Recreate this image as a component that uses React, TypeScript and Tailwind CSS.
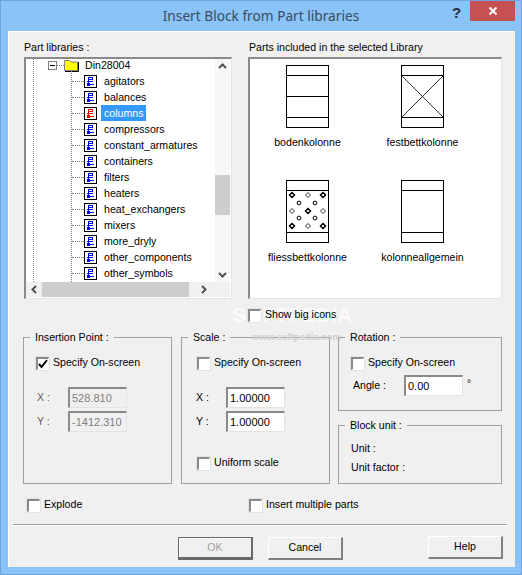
import React from "react";

const F = "font-['Liberation_Sans',Arial,sans-serif]";

function Check({ checked }: { checked?: boolean }) {
  return (
    <span className="w-[13px] h-[13px] shrink-0 bg-white border-t-2 border-l-2 border-t-[#8a8a8a] border-l-[#8a8a8a] border-r border-b border-r-[#fff] border-b-[#fff] outline outline-1 outline-[#e3e3e3] flex items-center justify-center">
      {checked && (
        <svg width="10" height="10" viewBox="0 0 10 10">
          <path d="M1 5 L3.5 8 L9 1" fill="none" stroke="#000" strokeWidth="2" />
        </svg>
      )}
    </span>
  );
}

function CheckRow({ label, checked, className = "" }: { label: string; checked?: boolean; className?: string }) {
  return (
    <div className={`flex items-center h-[14px] gap-[4px] text-[10.6px] text-black ${className}`}>
      <Check checked={checked} />
      <span className="whitespace-nowrap">{label}</span>
    </div>
  );
}

function Field({ value, disabled }: { value: string; disabled?: boolean }) {
  return (
    <input
      readOnly
      value={value}
      className={`w-[59px] h-[21px] pl-[2px] text-[11px] border-t-2 border-l-2 border-t-[#8a8a8a] border-l-[#8a8a8a] border-r border-b border-r-[#e3e3e3] border-b-[#e3e3e3] outline-none ${F} ${
        disabled ? "bg-[#f0f0f0] text-[#808080]" : "bg-white text-black"
      }`}
    />
  );
}

function Group({ title, className, children }: { title: string; className: string; children?: React.ReactNode }) {
  return (
    <fieldset className={`border border-[#a0a0a0] ${className}`}>
      <legend className="ml-[6px] px-[5px] text-[10.6px] leading-[14px] text-black whitespace-nowrap">{title}</legend>
      {children}
    </fieldset>
  );
}

function PartIcon({ color }: { color: string }) {
  return (
    <svg width="13" height="13" viewBox="0 0 13 13" className="shrink-0" shapeRendering="crispEdges">
      <rect x="0.5" y="0.5" width="12" height="12" fill="#fff" stroke="#000" />
      <g fill="none" stroke={color} strokeWidth="1">
        <path d="M4.5 2 V6" />
        <rect x="4.5" y="2.5" width="4" height="2" />
        <path d="M3 6.5 H9" />
        <path d="M4.5 7 V9" />
        <rect x="3.5" y="8.5" width="2" height="2" fill={color} />
        <path d="M5 9.5 H10" />
      </g>
    </svg>
  );
}

function Scroll({ dir }: { dir: "up" | "down" | "left" | "right" }) {
  const d = {
    up: "M1 6 L4.5 2.5 L8 6",
    down: "M1 3 L4.5 6.5 L8 3",
    left: "M6 1 L2.5 4.5 L6 8",
    right: "M3 1 L6.5 4.5 L3 8",
  }[dir];
  return (
    <svg width="9" height="9" viewBox="0 0 9 9">
      <path d={d} fill="none" stroke="#505050" strokeWidth="2" />
    </svg>
  );
}

const items = [
  "agitators",
  "balances",
  "columns",
  "compressors",
  "constant_armatures",
  "containers",
  "filters",
  "heaters",
  "heat_exchangers",
  "mixers",
  "more_dryly",
  "other_components",
  "other_symbols",
];

function Tree() {
  return (
    <div className="relative w-[208px] h-[242px] border-t-2 border-l-2 border-t-[#8a8a8a] border-l-[#8a8a8a] border-r border-b border-r-[#e3e3e3] border-b-[#e3e3e3] bg-white flex flex-col">
      <div className="flex h-[223px]">
        <div className="relative w-[189px] overflow-hidden">
          <div className="absolute left-[7px] top-0 bottom-0 border-l border-dotted border-[#808080]" />
          <div className="absolute left-[45px] top-[12px] bottom-0 border-l border-dotted border-[#808080]" />
          <div className="-mt-[1px] flex items-center h-[15px] pl-[22px] text-[10.6px] text-black">
            <span className="w-[9px] h-[9px] border border-[#808080] bg-white flex items-center justify-center shrink-0">
              <span className="w-[5px] h-px bg-black" />
            </span>
            <span className="w-[7px] border-t border-dotted border-[#808080]" />
            <svg width="15" height="13" viewBox="0 0 15 13" className="shrink-0">
              <path d="M0.5 3.5 V1.5 H5.5 L7 3 H13.5 V11.5 H0.5 Z" fill="#ffff00" stroke="#808080" />
              <path d="M14.5 3 V12.5 H1" fill="none" stroke="#000" />
            </svg>
            <span className="ml-[6px]">Din28004</span>
          </div>
          {items.map((n) => {
            const sel = n === "columns";
            return (
              <div key={n} className="flex items-center h-4 pl-[46px] text-[10.6px] text-black">
                <span className="w-[12px] border-t border-dotted border-[#808080]" />
                <PartIcon color={sel ? "#ff0000" : "#0000ff"} />
                <span
                  className={`ml-[4px] px-[3px] h-4 leading-4 whitespace-nowrap ${sel ? "bg-[#3399ff] text-white" : ""}`}
                >
                  {n}
                </span>
              </div>
            );
          })}
        </div>
        <div className="w-[15px] bg-[#f7f7f7] flex flex-col items-center justify-between py-[3px] relative">
          <Scroll dir="up" />
          <div className="absolute left-0 right-0 top-[116px] h-[40px] bg-[#cdcdcd]" />
          <Scroll dir="down" />
        </div>
      </div>
      <div className="flex items-center h-[15px] w-[204px] bg-[#f0f0f0]">
        <div className="w-[16px] pl-[4px] flex justify-start"><Scroll dir="left" /></div>
        <div className="w-[147px] h-full bg-[#cdcdcd]" />
        <div className="w-[25px] flex justify-center pl-[3px]"><Scroll dir="right" /></div>
      </div>
    </div>
  );
}

function Column({ children, label }: { children?: React.ReactNode; label: string }) {
  return (
    <div className="flex flex-col items-center w-[115px]">
      <svg width="44" height="64" viewBox="0 0 44 64" shapeRendering="crispEdges">
        <rect x="0.5" y="0.5" width="42" height="62" fill="#fff" stroke="#000" strokeWidth="1" />
        <path d="M0 10.5 H43 M0 52.5 H43" stroke="#000" fill="none" />
        {children}
      </svg>
      <span className="mt-[6px] h-[14px] leading-[14px] text-[10.6px] text-black whitespace-nowrap">{label}</span>
    </div>
  );
}

const dots: [number, number, boolean][] = [
  [6, 15, true], [22, 15, false], [37, 15, true],
  [6, 31, false], [22, 31, true], [37, 31, false],
  [6, 46, true], [22, 46, false], [37, 46, true],
];
const rings: [number, number][] = [
  [13, 23], [29, 23], [13, 38], [29, 38],
];

function Parts() {
  return (
    <div className="w-[254px] h-[242px] border-t-2 border-l-2 border-t-[#8a8a8a] border-l-[#8a8a8a] border-r border-b border-r-[#e3e3e3] border-b-[#e3e3e3] bg-white pt-[6px]">
      <div className="flex">
        <Column label="bodenkolonne"><path d="M0 31.5 H43" stroke="#000" /></Column>
        <Column label="festbettkolonne">
          <path d="M0.5 10.5 L42.5 52.5 M42.5 10.5 L0.5 52.5" stroke="#000" strokeWidth="0.8" shapeRendering="auto" />
        </Column>
      </div>
      <div className="flex mt-[31px]">
        <Column label="fliessbettkolonne">
          <g shapeRendering="auto">
            {rings.map(([x, y], i) => (
              <circle key={i} cx={x} cy={y} r="1.9" fill="#fff" stroke="#000" strokeWidth="1" />
            ))}
            {dots.map(([x, y, b], i) => (
              <path
                key={i}
                d={`M${x} ${y - 2.5} L${x + 2.5} ${y} L${x} ${y + 2.5} L${x - 2.5} ${y} Z`}
                fill="#fff"
                stroke="#000"
                strokeWidth={b ? 1.5 : 0.8}
              />
            ))}
          </g>
        </Column>
        <Column label="kolonneallgemein" />
      </div>
    </div>
  );
}

function Btn({ label, def, className = "" }: { label: string; def?: boolean; className?: string }) {
  return (
    <div
      className={`w-[75px] h-[23px] flex items-center justify-center text-[10.6px] bg-[#f0f0f0] ${
        def
          ? "border border-[#696969] border-b-[3px] border-r-2 shadow-[inset_1px_1px_0_#fff] text-[#a0a0a0]"
          : "border-t border-l border-t-white border-l-white border-r-2 border-b-2 border-r-[#808080] border-b-[#808080] text-black"
      } ${className}`}
    >
      {label}
    </div>
  );
}

export default function App() {
  return (
    <div className={`relative w-[522px] h-[575px] bg-[#89c3f8] border border-[#6fa5dc] flex flex-col overflow-hidden ${F}`}>
      <div className="relative flex items-center justify-center h-[30px] shrink-0">
        <span className="text-[13.7px] text-[#3a4c5e] font-['Noto_Sans',sans-serif]">Insert Block from Part libraries</span>
        <span className="absolute left-[451px] top-[1px] text-[15px] font-bold text-[#26303a]">?</span>
        <div className="absolute left-[469px] top-0 w-[45px] h-[20px] bg-[#c75050] flex items-center justify-center">
          <svg width="10" height="10" viewBox="0 0 10 10">
            <path d="M1.5 1.5 L8.5 8.5 M8.5 1.5 L1.5 8.5" stroke="#fff" strokeWidth="2" />
          </svg>
        </div>
      </div>
      <div className="ml-[7px] mr-[6px] mb-[7px] flex-1 bg-[#f0f0f0] border-l border-t border-[#fff] flex flex-col">
        <div className="flex mt-[8px] ml-[15px] h-[14px] text-[10.6px] leading-[14px] text-black">
          <span className="w-[225px]">Part libraries :</span>
          <span className="whitespace-nowrap">Parts included in the selected Library</span>
        </div>
        <div className="flex gap-[16px] ml-[15px] mt-[3px]">
          <Tree />
          <Parts />
        </div>
        <CheckRow label="Show big icons" className="relative z-10 ml-[239px] mt-[9px]" />
        <div className="flex mt-[8px] ml-[14px] h-[154px]">
          <Group title="Insertion Point :" className="w-[149px] h-full">
            <CheckRow label="Specify On-screen" checked className="ml-[12px] mt-[12px]" />
            <div className="grid grid-cols-[31px_59px] items-center gap-y-[3px] ml-[13px] mt-[17px] text-[10.6px] text-[#606060]">
              <span>X :</span><Field value="528.810" disabled />
              <span>Y :</span><Field value="-1412.310" disabled />
            </div>
          </Group>
          <Group title="Scale :" className="w-[149px] h-full ml-[9px]">
            <CheckRow label="Specify On-screen" className="ml-[15px] mt-[12px]" />
            <div className="grid grid-cols-[30px_59px] items-center gap-y-[3px] ml-[14px] mt-[17px] text-[10.6px] text-black">
              <span>X :</span><Field value="1.00000" />
              <span>Y :</span><Field value="1.00000" />
            </div>
            <CheckRow label="Uniform scale" className="ml-[15px] mt-[24px]" />
          </Group>
          <div className="w-[164px] ml-[8px] h-full flex flex-col">
            <Group title="Rotation :" className="h-[81px]">
              <CheckRow label="Specify On-screen" className="ml-[12px] mt-[12px]" />
              <div className="flex items-center mt-[5px] ml-[14px] text-[10.6px] text-black">
                <span className="w-[51px]">Angle :</span>
                <Field value="0.00" />
                <span className="ml-[4px] -mt-[4px] text-[10px]">°</span>
              </div>
            </Group>
            <Group title="Block unit :" className="h-[66px] mt-[7px]">
              <div className="ml-[12px] mt-[9px] text-[10.6px] leading-[14px] text-black">Unit :</div>
              <div className="ml-[12px] mt-[5px] text-[10.6px] leading-[14px] text-black">Unit factor :</div>
            </Group>
          </div>
        </div>
        <div className="flex mt-[14px] ml-[18px]">
          <CheckRow label="Explode" className="w-[222px]" />
          <CheckRow label="Insert multiple parts" />
        </div>
        <div className="ml-[4px] mr-[8px] mt-[12px] h-[2px] border-t border-t-[#a0a0a0] border-b border-b-white" />
        <div className="flex items-start ml-[169px] mt-[11px]">
          <Btn label="OK" def />
          <Btn label="Cancel" className="ml-[15px]" />
          <Btn label="Help" className="ml-[85px] -mt-[1px]" />
        </div>
      </div>
      <div className="absolute left-[231px] top-[298px] text-[21px] font-bold text-white/70 pointer-events-none">SOFTPEDIA</div>
      <div className="absolute left-[251px] top-[329px] text-[9.5px] font-bold text-[#cfcfcf] pointer-events-none">www.softpedia.com</div>
    </div>
  );
}
